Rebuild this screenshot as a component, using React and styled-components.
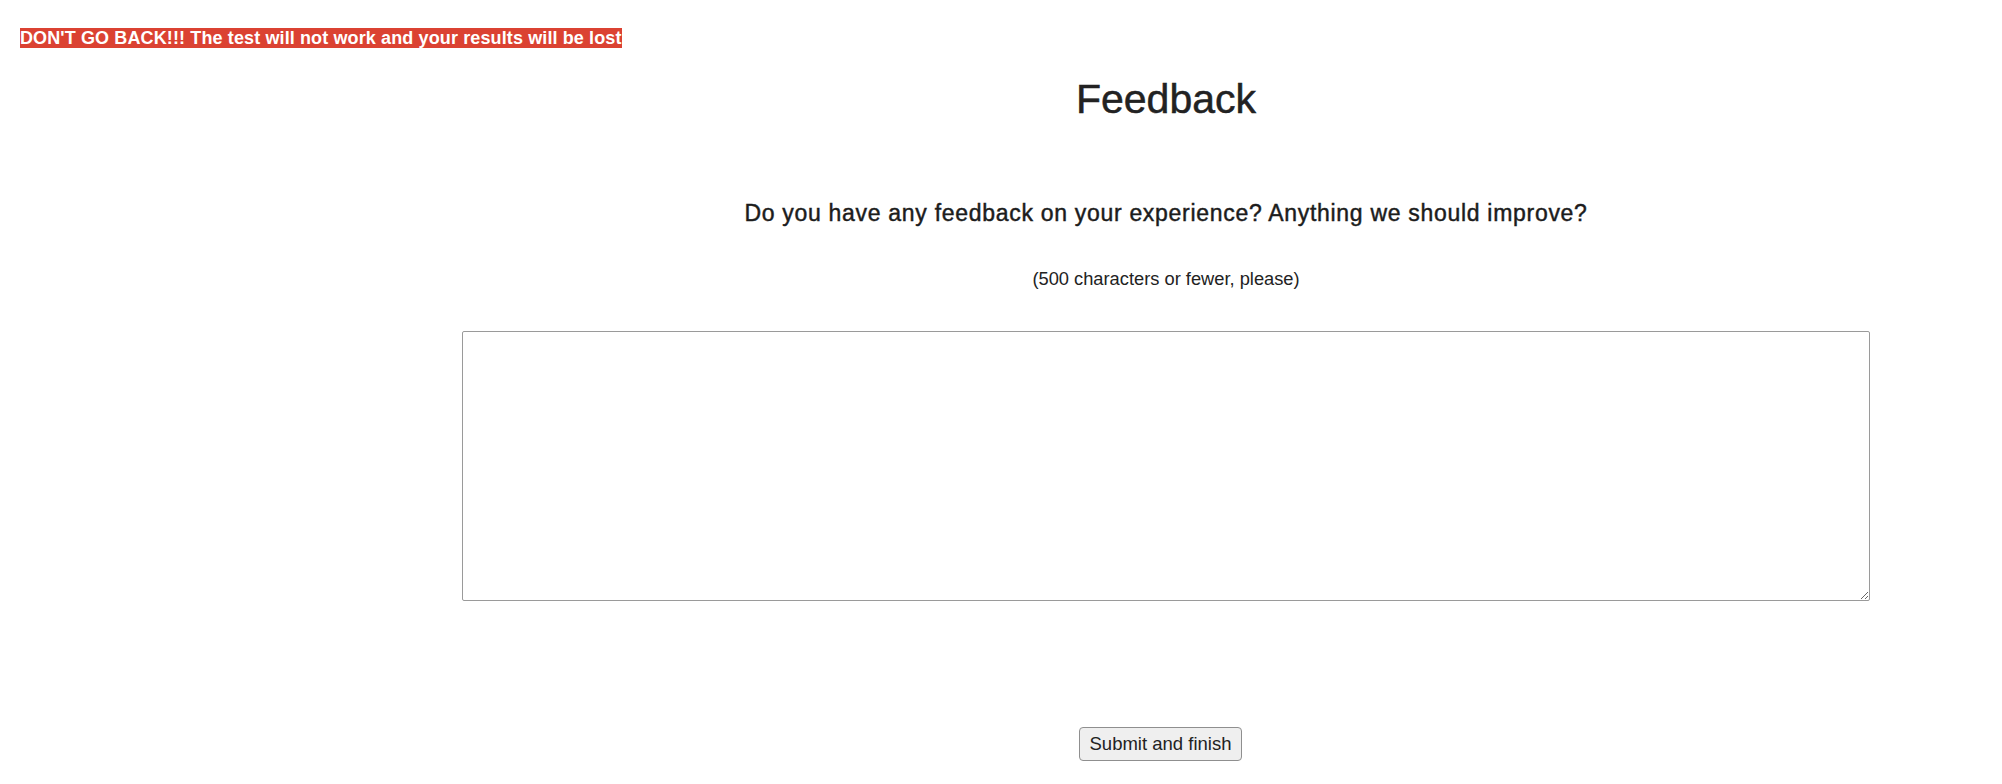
import React from 'react';
import styled, { createGlobalStyle } from 'styled-components';

const GlobalStyle = createGlobalStyle`
  body {
    margin: 0;
    background: #ffffff;
    font-family: "Liberation Sans", Arial, sans-serif;
    color: #222;
  }
`;

const Page = styled.div`
  padding-top: 28px;
`;

const WarningRow = styled.div`
  padding-left: 20px;
  line-height: 21px;
`;

const Warning = styled.span`
  background: #db4232;
  color: #ffffff;
  font-size: 18px;
  font-weight: 700;
  letter-spacing: 0.12px;
  white-space: nowrap;
`;

const Main = styled.main`
  width: 1408px;
  margin-left: 462px;
  display: flex;
  flex-direction: column;
  align-items: center;
  text-align: center;
`;

const Heading = styled.h1`
  margin: 27px 0 0;
  font-size: 41px;
  font-weight: 400;
  line-height: 47px;
  color: #222;
  -webkit-text-stroke: 0.5px #222;
`;

const Question = styled.h2`
  margin: 77px 0 0;
  font-size: 23px;
  font-weight: 400;
  line-height: 26px;
  letter-spacing: 0.7px;
  color: #1c1c1c;
  -webkit-text-stroke: 0.45px #1c1c1c;
`;

const Hint = styled.p`
  margin: 42px 0 0;
  font-size: 18.3px;
  line-height: 21px;
  color: #222;
`;

const Feedback = styled.textarea`
  display: block;
  box-sizing: border-box;
  width: 100%;
  height: 270px;
  margin-top: 42px;
  border: 1px solid #9a9a9a;
  border-radius: 2px;
  font-family: inherit;
  font-size: 16px;
`;

const SubmitButton = styled.button`
  margin: 126px 11px 0 0;
  height: 34px;
  padding: 0 10px;
  font-family: "Liberation Sans", Arial, sans-serif;
  font-size: 18.5px;
  color: #222;
  background: #efefef;
  border: 1px solid #8f8f8f;
  border-radius: 4px;
  cursor: pointer;
`;

const App = () => {
  return (
    <>
      <GlobalStyle />
      <Page>
        <WarningRow>
          <Warning>DON'T GO BACK!!! The test will not work and your results will be lost</Warning>
        </WarningRow>
        <Main>
          <Heading>Feedback</Heading>
          <Question>Do you have any feedback on your experience? Anything we should improve?</Question>
          <Hint>(500 characters or fewer, please)</Hint>
          <Feedback />
          <SubmitButton>Submit and finish</SubmitButton>
        </Main>
      </Page>
    </>
  );
};

export default App;
